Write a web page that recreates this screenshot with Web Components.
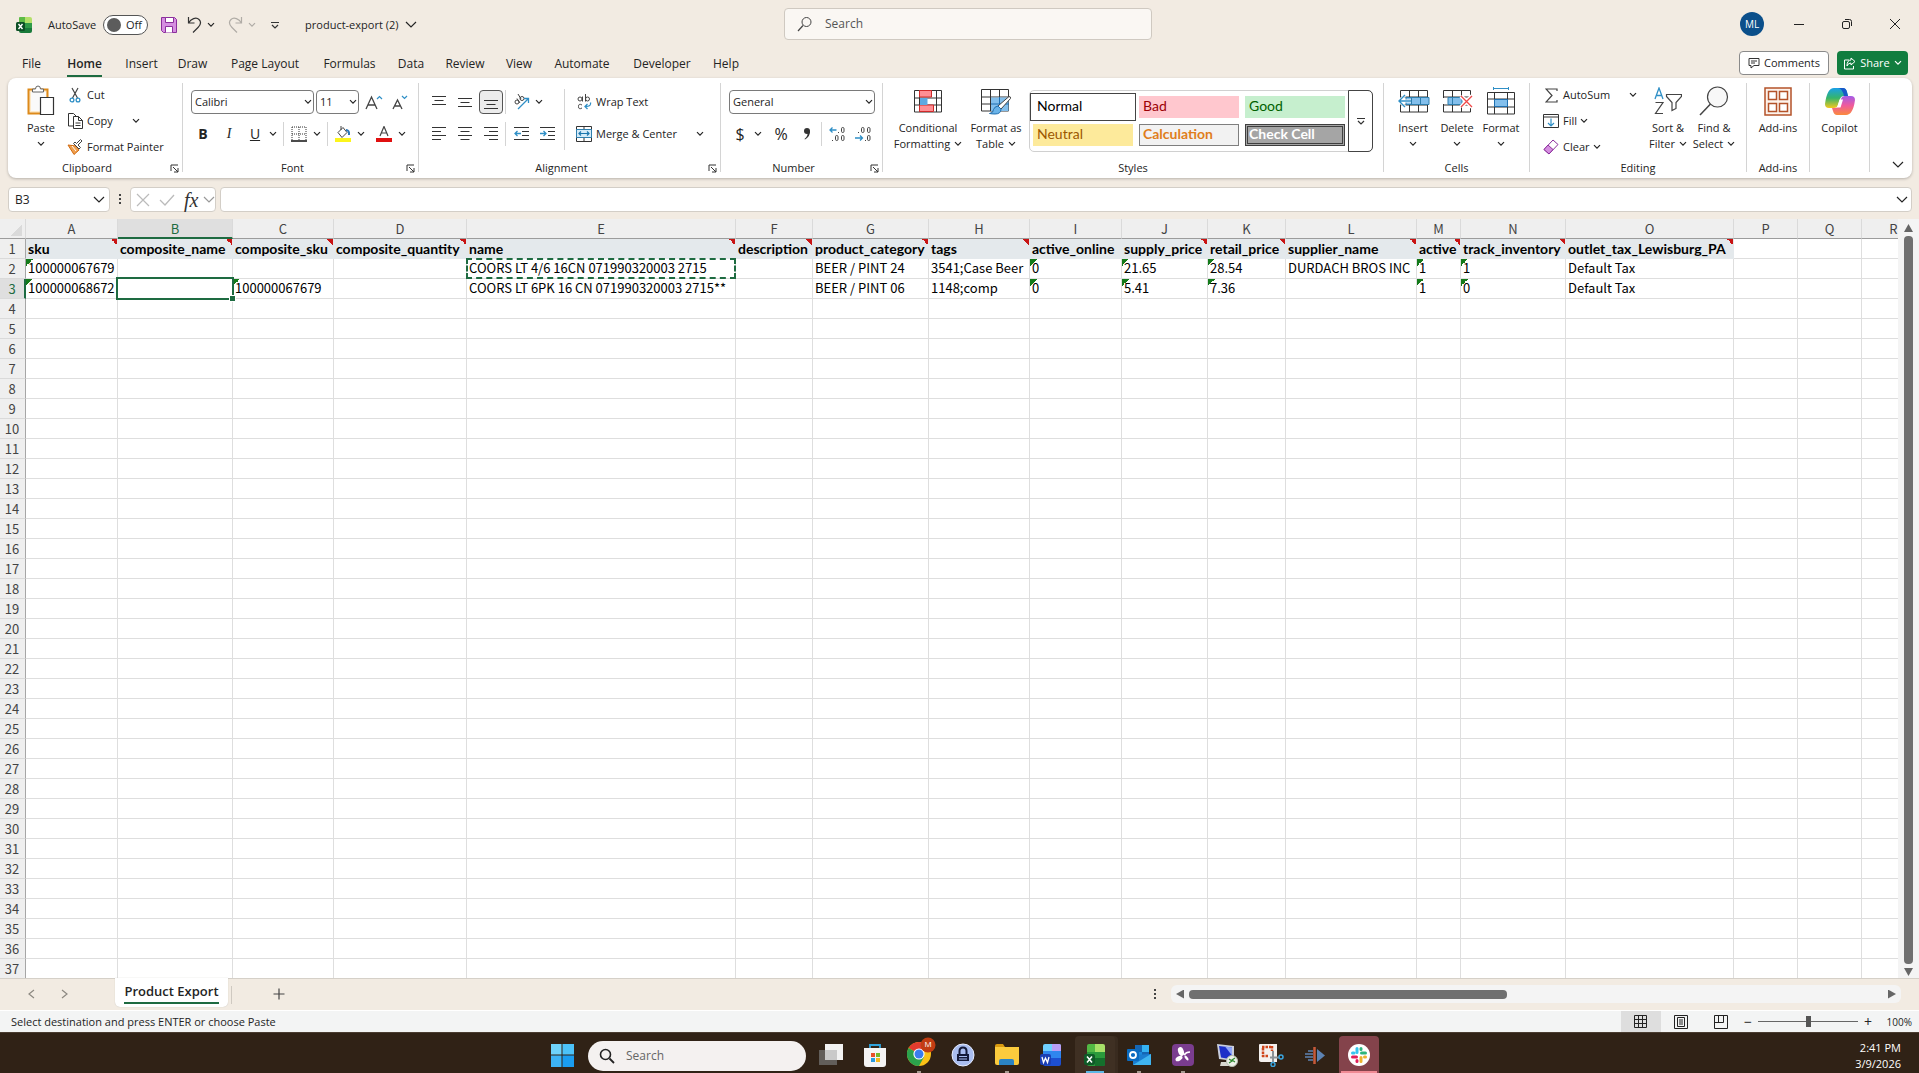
<!DOCTYPE html>
<html lang="en">
<head>
<meta charset="utf-8">
<title>product-export (2) - Excel</title>
<style>
    html, body { height: 100%; }
    body {
        margin: 0;
        display: flex;
        flex-direction: column;
        overflow: hidden;
        background: #f2ebe2;
        color: #242424;
        font: 11px/16px "Open Sans", "Noto Sans", sans-serif;
    }
    sheet-grid { flex: 1; min-height: 0; }
</style>
</head>
<body>
<title-bar></title-bar>
<ribbon-tabs></ribbon-tabs>
<excel-ribbon></excel-ribbon>
<formula-bar></formula-bar>
<sheet-grid></sheet-grid>
<sheet-tabs></sheet-tabs>
<status-bar></status-bar>
<task-bar></task-bar>

<script>
// [width, height, markup]
const ICONS = {
    chev: [8, 6, '<path d="M1 1.2l3 3 3-3" fill="none" stroke="currentColor" stroke-width="1.2"/>'],
    chevbig: [12, 8, '<path d="M1 1l5 5 5-5" fill="none" stroke="currentColor" stroke-width="1.2"/>'],
    launcher: [9, 9, '<path d="M1 7V1h7M3 3l5 5M8 4v4H4" fill="none" stroke="#333"/>'],
    excel: [16, 16, '<path d="M3 1q0-1 1-1h6v6H3z" fill="#5dbb46"/><path d="M9 0h5q2 0 2 2v4H9z" fill="#b5e06a"/><path d="M3 6h13v8q0 2-2 2H5q-2 0-2-2z" fill="#187a3a"/><path d="M9 6h7v5H9z" fill="#2f9a48"/><rect y="5" width="9" height="9" rx="1.500" fill="#0d4f26"/><path d="M2.500 7l4 5M6.500 7l-4 5" stroke="#fff" stroke-width="1.400"/>'],
    save: [16, 16, '<path d="M.5.500h13l2 2v13H2.500l-2-2z" fill="#d58ee0" stroke="#8b2f9c"/><path d="M4.500.500h8v5h-8zM4.500 15.500v-6h7v6" fill="#fff" stroke="#8b2f9c"/>'],
    undo: [17, 17, '<path d="M2.500 1v6h6M2.500 7C5 3 10 .5 13 3.500c3 3 1 6-1 8l-5 5" fill="none" stroke="#333" stroke-width="1.200"/>'],
    redo: [17, 17, '<path d="M14.500 1v6h-6M14.500 7C12 3 7 .5 4 3.500c-3 3-1 6 1 8l5 5" fill="none" stroke="#b0aca6" stroke-width="1.200"/>'],
    customize: [8, 8, '<path d="M0 1.500h8" stroke="#333"/><path d="M1 4l3 3 3-3" fill="none" stroke="#333" stroke-width="1.200"/>'],
    search: [16, 16, '<circle cx="9.500" cy="6" r="4.500" fill="none" stroke="#444"/><path d="M6 9.500L1 15" stroke="#444" stroke-width="1.200"/>'],
    min: [12, 12, '<path d="M1 6.500h10" stroke="#222"/>'],
    restore: [12, 12, '<rect x="1.500" y="3.500" width="7" height="7" rx="1.500" fill="none" stroke="#222"/><path d="M4 1.500h4.500q2 0 2 2V8" fill="none" stroke="#222"/>'],
    close: [12, 12, '<path d="M1 1l10 10M11 1L1 11" stroke="#222"/>'],
    comment: [12, 12, '<path d="M1 1.500h10v7H6l-3 2.500V8.500H1z" fill="none" stroke="#333"/><path d="M3 4h6M3 6h4" stroke="#333"/>'],
    share: [13, 13, '<path d="M6 3H1.500v9h9V9" fill="none" stroke="#fff"/><path d="M8 1l4 3.500L8 8V6Q5 6 4 9q0-6 4-6z" fill="none" stroke="#fff"/>'],
    paste: [28, 32, '<path d="M1.500 4.500h19v24h-19z" fill="#fde9c8" stroke="#dd8a1a" stroke-width="2"/><path d="M4 7h15v19H4z" fill="#fafafa"/><path d="M5.500 7V4h3q0-3 2.500-3t2.500 3h3v3z" fill="#fff" stroke="#666"/><path d="M13.500 12.500h13v17h-13z" fill="#fff" stroke="#333" stroke-width="1.200"/>'],
    cut: [12, 16, '<path d="M3 1l5.500 10M9 1L3.500 11" stroke="#444" stroke-width="1.200"/><circle cx="3" cy="13" r="1.900" fill="none" stroke="#2f8fc6" stroke-width="1.300"/><circle cx="9" cy="13" r="1.900" fill="none" stroke="#2f8fc6" stroke-width="1.300"/>'],
    copy: [17, 16, '<path d="M7 13H1.500V.500h5l3 3" fill="none" stroke="#333"/><path d="M6.500 3.500h5l4 4v8h-9z" fill="#fff" stroke="#333"/><path d="M11.500 3.500v4h4M8.500 10h5M8.500 12.500h5" fill="none" stroke="#333"/>'],
    painter: [16, 16, '<path d="M1 6l8 1 3 4-5 4.500z" fill="#f0a050" stroke="#d06a10"/><path d="M5 7l4 5" stroke="#fff"/><path d="M6.500 4.500l5.500 5.500 1.500-1.500L11 6l4-4-1.500-1.500-4 4L8 3z" fill="#fff" stroke="#444"/>'],
    bigA: [18, 16, '<path d="M1 15L6.500 3 12 15M3 11h7" fill="none" stroke="#444" stroke-width="1.300"/><path d="M12 5l2.500-2.500L17 5" fill="none" stroke="#2f8fc6" stroke-width="1.200"/>'],
    smallA: [16, 16, '<path d="M1 15L5.500 6 10 15M3 12h5" fill="none" stroke="#444" stroke-width="1.300"/><path d="M10 2l2.500 2.500L15 2" fill="none" stroke="#2f8fc6" stroke-width="1.200"/>'],
    borders: [16, 16, '<path d="M1 1h14v14M1 1v14M8 1v14M1 8h14" fill="none" stroke="#333" stroke-dasharray="1 1"/><path d="M0 15h16" stroke="#111" stroke-width="1.500"/>'],
    bucket: [16, 16, '<path d="M3 6.500l5-5 4 5-5 5zM6 4V0" fill="#fff" stroke="#444"/><path d="M11 4q3.500 0 3 5" fill="none" stroke="#2a77b8" stroke-width="2"/><path d="M0 12h16v4H0z" fill="#fcf51c"/>'],
    fontcolor: [16, 16, '<path d="M4 10L8 .500 12 10M5.500 7h5" fill="none" stroke="#444" stroke-width="1.200"/><path d="M0 12h16v4H0z" fill="#e01010"/>'],
    vtop: [14, 14, '<path d="M0 1.500h14M2.500 5.500h9M0 9.500h14" stroke="#333"/>'],
    vmid: [14, 14, '<path d="M0 3.500h14M2.500 7.500h9M0 11.500h14" stroke="#333"/>'],
    vbot: [14, 14, '<path d="M0 5.500h14M2.500 9.500h9M0 13.500h14" stroke="#333"/>'],
    left: [14, 14, '<path d="M0 .5h14M0 4.500h9M0 8.500h14M0 12.500h9" stroke="#333"/>'],
    center: [14, 14, '<path d="M0 .5h14M2.500 4.500h9M0 8.500h14M2.500 12.500h9" stroke="#333"/>'],
    right: [14, 14, '<path d="M0 .5h14M5 4.500h9M0 8.500h14M5 12.500h9" stroke="#333"/>'],
    orient: [17, 16, '<g fill="none" stroke="#444"><circle cx="4" cy="8" r="2"/><path d="M4 4.500l3 4.500"/><circle cx="9" cy="4.500" r="2"/><path d="M5 0l3 5"/></g><path d="M5 15L15 5M11 4.500h4.500V9" fill="none" stroke="#2f8fc6" stroke-width="1.300"/>'],
    outdent: [15, 14, '<path d="M0 .5h15M8 4.500h7M8 8.500h7M0 12.500h15" stroke="#333"/><path d="M7 6.500H1M3.500 4L1 6.500 3.500 9" fill="none" stroke="#2f8fc6" stroke-width="1.300"/>'],
    indent: [15, 14, '<path d="M0 .5h15M8 4.500h7M8 8.500h7M0 12.500h15" stroke="#333"/><path d="M0 6.500h6M3.500 4L6 6.500 3.500 9" fill="none" stroke="#2f8fc6" stroke-width="1.300"/>'],
    wrap: [15, 16, '<g fill="none" stroke="#444"><circle cx="3" cy="5" r="2"/><path d="M5.500 2.500v5M8.500 0v7.500"/><circle cx="10.500" cy="5" r="2"/><path d="M5 11q-3.500-2-3.500 1.500T5 14"/></g><path d="M13.500 8.500q1 4-5 4M10.500 10L8 12.500l2.500 2.500" fill="none" stroke="#2f8fc6" stroke-width="1.300"/>'],
    merge: [16, 16, '<path d="M.5.500h15v15H.500zM8 0v4M8 12v4" fill="#fff" stroke="#333"/><path d="M.5 3.500h15v8H.500z" fill="#d5ebf8" stroke="#2f7fae"/><path d="M3 7.500h10M5 5.500l-2 2 2 2M11 5.500l2 2-2 2" fill="none" stroke="#1b76ad" stroke-width="1.200"/>'],
    comma: [8, 14, '<circle cx="4" cy="4" r="3" fill="#333"/><path d="M7 4q.5 5-5 8.500L1.500 12Q5 9 4.500 6z" fill="#333"/>'],
    decinc: [16, 16, '<g fill="none" stroke="#444"><rect x="12.500" y="1.500" width="2.500" height="5" rx="1.200"/><rect x="6.500" y="9.500" width="2.500" height="5" rx="1.200"/><rect x="12.500" y="9.500" width="2.500" height="5" rx="1.200"/><path d="M9.500 6v1M3.500 14v1"/></g><path d="M7.500 4H1M3.500 1.500L1 4l2.500 2.500" fill="none" stroke="#2f8fc6" stroke-width="1.300"/>'],
    decdec: [16, 16, '<g fill="none" stroke="#444"><rect x="6.500" y="1.500" width="2.500" height="5" rx="1.200"/><rect x="12.500" y="1.500" width="2.500" height="5" rx="1.200"/><rect x="12.500" y="9.500" width="2.500" height="5" rx="1.200"/><path d="M3.500 6v1M10.500 14v1"/></g><path d="M0 12h7.500M5 9.500L7.500 12 5 14.500" fill="none" stroke="#2f8fc6" stroke-width="1.300"/>'],
    condfmt: [28, 23, '<path d="M.5.500h27v21.500H.500zM.5 8h27M.5 15h27M5.500 0v22M22.500 0v22" fill="#fff" stroke="#333"/><path d="M5.500.500h12V7h-12zM5.500 15h14v6.500h-14z" fill="#ff8f94" stroke="#d02a2a"/><path d="M6 8h7.500v7H6z" fill="#5ea9e2"/>'],
    fmttable: [31, 28, '<path d="M.5 2.500h27V24H.500zM.5 10h27M.5 17h27M9.500 2v22M18.500 2v22" fill="#fff" stroke="#333"/><path d="M10 10.500h17.500V24H10z" fill="#83bfec"/><path d="M10 17h18M18.500 10v14" stroke="#1f6fb0"/><path d="M17 19L28 9.500q2 0 1.500 2L20 22z" fill="#fff" stroke="#444"/><path d="M17 19l3 3q0 5-6 5-3 0-5.500-.500 4-.500 4-4 1-3 4.500-3.500z" fill="#6ab3e8" stroke="#1f6fb0"/>'],
    insert: [33, 23, '<path d="M3.500.500h27v21.500h-27zM3.500 7h27M3.500 15h27M12.500 0v22M21.500 0v22" fill="#fff" stroke="#333"/><path d="M9 7.500h23v7H9z" fill="#83bfec" stroke="#2f7fae"/><path d="M14.500 7.500v7M23.500 7.500v7" stroke="#2f7fae"/><path d="M14 11H2M8 5l-6 6 6 6" fill="none" stroke="#fff" stroke-width="3"/><path d="M14 11H2M8 5l-6 6 6 6" fill="none" stroke="#2f8fc6" stroke-width="1.400"/>'],
    delete: [32, 23, '<path d="M2.500.500h27v21.500h-27zM2.500 7h27M2.500 15h27M11.500 0v22M20.500 0v22" fill="#fff" stroke="#333"/><path d="M1 8h4v6H1zM27 8h5v6h-5z" fill="#fff"/><path d="M7 7.500h14v7H7z" fill="#83bfec" stroke="#2f7fae"/><path d="M11.500 7.500v7" stroke="#2f7fae"/><path d="M20 6l11 11M31 6L20 17" stroke="#fff" stroke-width="4"/><path d="M20 6l11 11M31 6L20 17" stroke="#f04848" stroke-width="1.300"/>'],
    format: [28, 28, '<path d="M.5 5.500h27V27H.500zM.5 12h27M.5 20h27M7.500 5v22M20.500 5v22" fill="#fff" stroke="#333"/><path d="M7.500 12.500h13v7h-13z" fill="#83bfec" stroke="#1f6fb0"/><path d="M6.500 0v3M21.500 0v3M6.500 1.500h15" stroke="#2f8fc6"/>'],
    sigma: [13, 15, '<path d="M12 3V1H1l6 6.500L1 14h11v-2" fill="none" stroke="#444" stroke-width="1.200"/>'],
    fill: [16, 14, '<path d="M.5.500h15v13H.500zM.5 3h15" fill="#fff" stroke="#333"/><path d="M8 4.500V12M5 9l3 3 3-3" fill="none" stroke="#2f8fc6" stroke-width="1.200"/>'],
    eraser: [16, 16, '<path d="M1 10.500L10 1l5 4.500L6 15z" fill="#fff" stroke="#8b2f9c"/><path d="M1 10.500L5 6l5 4.500L6 15z" fill="#d58ee0" stroke="#8b2f9c"/>'],
    sort: [28, 28, '<path d="M1 12L5 1l4 11M2.500 8.500h5" fill="none" stroke="#2f8fc6" stroke-width="1.300"/><path d="M1.500 15.500H9L1.500 26.500H9" fill="none" stroke="#444" stroke-width="1.200"/><path d="M12.500 7.500h15v2l-5.500 6v6l-4 2v-8l-5.500-6z" fill="#fff" stroke="#444" stroke-width="1.200"/>'],
    find: [30, 30, '<circle cx="18.500" cy="11" r="10" fill="#f8f8f8" stroke="#444" stroke-width="1.200"/><path d="M11.500 18L1 29" stroke="#444" stroke-width="1.500"/>'],
    addins: [28, 29, '<path d="M1 1h26v27H1z" fill="#fdf3ec" stroke="#b4532a" stroke-width="1.500"/><path d="M4.500 4.500h8v8h-8zM15.500 4.500h8v8h-8zM4.500 16.500h8v8h-8zM15.500 16.500h8v8h-8z" fill="#fff" stroke="#b4532a" stroke-width="1.500"/>'],
    copilot: [30, 29, '<defs><linearGradient id="a" x1="0" y1="0" x2="0" y2="1"><stop stop-color="#1aa0e8"/><stop offset=".5" stop-color="#35b56a"/><stop offset="1" stop-color="#f4c81e"/></linearGradient><linearGradient id="b" x1="0" y1="0" x2="0" y2="1"><stop stop-color="#a45be8"/><stop offset=".5" stop-color="#ef5b9c"/><stop offset="1" stop-color="#fb8a3c"/></linearGradient></defs><path d="M9 1h9q3 0 4 4l1 4h-4q-3 0-4 3l-2 6q-1 3-4 3H4q-4 0-4-4Q2 1 9 1z" fill="url(#a)"/><path d="M21 28h-9q-3 0-4-4l-1-3h3q3 0 4-3l2-6q1-3 4-3h6q4 0 4 4-2 15-9 15z" fill="url(#b)"/><path d="M13 1h5q3 0 4 4l1 4h-4q-2-8-6-8z" fill="#1858c8"/><path d="M14.500 12.500h3.500l-2.500 8H12z" fill="#fff"/>'],
    dots: [4, 11, '<path d="M1 0h2v2H1zM1 4h2v2H1zM1 8h2v2H1z" fill="#444"/>'],
    cancel: [14, 14, '<path d="M1 1l12 12M13 1L1 13" stroke="#bbb" stroke-width="1.200"/>'],
    enter: [16, 12, '<path d="M1 6l5 5L15 1" fill="none" stroke="#bbb" stroke-width="1.300"/>'],
    prev: [7, 10, '<path d="M6 1L1 5l5 4" fill="none" stroke="#8c8880" stroke-width="1.200"/>'],
    next: [7, 10, '<path d="M1 1l5 4-5 4" fill="none" stroke="#8c8880" stroke-width="1.200"/>'],
    plus: [12, 12, '<path d="M6 .500v11M.5 6h11" stroke="#444" stroke-width="1.200"/>'],
    normal: [14, 14, '<path d="M.5.500h12v12H.500zM.5 4.500h12M.5 8.500h12M4.500 0v13M8.500 0v13" fill="none" stroke="#222"/>'],
    layout: [14, 14, '<path d="M.5.500h13v13H.500zM3.500 2.500h7v9h-7zM5 5h4M5 7h4M5 9h4" fill="none" stroke="#222"/>'],
    pagebreak: [14, 14, '<path d="M.5.500h13v13H.500zM4.500 0v7.500H9.500V0M.5 7.500H5" fill="none" stroke="#222"/>'],
    // task bar
    windows: [24, 24, '<path d="M1 1h10.500v10.500H1z" fill="#6fd3fb"/><path d="M12.500 1H24v10.500H12.500z" fill="#4cc2f8"/><path d="M1 12.500h10.500V24H1z" fill="#3db4f5"/><path d="M12.500 12.500H24V24H12.500z" fill="#1a9df0"/>'],
    tbsearch: [16, 16, '<circle cx="6.500" cy="6.500" r="5" fill="none" stroke="#222" stroke-width="1.600"/><path d="M10.500 10.500L15 15" stroke="#222" stroke-width="1.800"/>'],
    taskview: [24, 24, '<path d="M6 1h18v16H6z" fill="#f2f2f2"/><path d="M0 7h18v15H0z" fill="#777" fill-opacity=".7"/><path d="M6 7h12v10H6z" fill="#c9c9c9"/>'],
    store: [24, 24, '<path d="M7 6V2h10v4" fill="none" stroke="#2fa3dc" stroke-width="1.800"/><path d="M1 5h22v16q0 3-3 3H4q-3 0-3-3z" fill="#f4f4f4"/><path d="M8 10h4v4H8z" fill="#e8502a"/><path d="M13 10h4v4h-4z" fill="#76b82a"/><path d="M8 15h4v4H8z" fill="#2a9be0"/><path d="M13 15h4v4h-4z" fill="#f5b81e"/>'],
    chrome: [30, 30, '<circle cx="12" cy="17" r="12" fill="#fbc116"/><path d="M12 17L1.600 11A12 12 0 0 1 22.400 11z" fill="#e33b2e"/><path d="M12 17L1.600 11A12 12 0 0 0 12 29l5-9z" fill="#2ba24c"/><circle cx="12" cy="17" r="5.600" fill="#fff"/><circle cx="12" cy="17" r="4.500" fill="#3b7ded"/><circle cx="21" cy="8" r="7.500" fill="#c23d12"/>'],
    lock: [24, 24, '<circle cx="12" cy="12" r="11" fill="#a9bdf0" stroke="#e6ecff"/><path d="M8.500 11V8q0-3.500 3.500-3.500T15.500 8v3" fill="none" stroke="#151b3a" stroke-width="2"/><path d="M6 11h12v7H6z" fill="#151b3a"/><path d="M8 13.500h8M8 16h8" stroke="#a9bdf0"/>'],
    folder: [24, 24, '<path d="M0 3q0-2 2-2h6l2 3H0z" fill="#d99a10"/><path d="M0 4h24v16q0 2-2 2H2q-2 0-2-2z" fill="#fbcb3d"/><path d="M4 22v-4q0-2 2-2h11q2 0 2 2v4z" fill="#2b84c4"/>'],
    word: [24, 24, '<path d="M4 3q0-2 2-2h14q2 0 2 2v5H4z" fill="#6fd0ff"/><path d="M13 1h7q2 0 2 2v5h-9z" fill="#b99df5"/><path d="M4 8h18v7H4z" fill="#2f86ee"/><path d="M4 15h18v6q0 2-2 2H6q-2 0-2-2z" fill="#1d4fd0"/><rect x="1" y="11" width="11" height="11" rx="2" fill="#1b3fb4"/><path d="M3 14l1.500 5.500L6.500 15l2 4.500L10 14" fill="none" stroke="#fff" stroke-width="1.300"/>'],
    excel24: [24, 24, '<path d="M4 3q0-2 2-2h8v9H4z" fill="#52b944"/><path d="M12 1h8q2 0 2 2v7H12z" fill="#a7e068"/><path d="M4 9h18v12q0 2-2 2H6q-2 0-2-2z" fill="#2a9a3c"/><path d="M12 15h10v6q0 2-2 2h-8z" fill="#14702c"/><rect x="1" y="11" width="11" height="11" rx="2" fill="#0f5a28"/><path d="M4 13.500l5 6M9 13.500l-5 6" stroke="#fff" stroke-width="1.500"/>'],
    outlook: [24, 24, '<path d="M8 2h14v14H8z" fill="#1566b4"/><path d="M15 2h7v7h-7z" fill="#35b2f2"/><path d="M8 9h7v7H8z" fill="#1b8ade"/><path d="M6 12l18-1v11H6z" fill="#1a7dd0"/><path d="M6 22l18-11v11z" fill="#3fb4f0"/><rect y="6" width="12" height="12" rx="1" fill="#0a6bc0"/><circle cx="6" cy="12" r="3" fill="none" stroke="#fff" stroke-width="1.800"/>'],
    splash: [24, 24, '<rect x="1" y="1" width="22" height="22" rx="4" fill="#7a3d8f"/><g fill="#fff"><ellipse cx="10" cy="8.500" rx="2.800" ry="4.500" transform="rotate(-20 10 8.500)"/><ellipse cx="8" cy="15.500" rx="3.800" ry="2.200" transform="rotate(-30 8 15.500)"/><ellipse cx="15.500" cy="15" rx="2.800" ry="1.300" transform="rotate(50 15.500 15)"/></g><path d="M13 12q2-3 6-3" fill="none" stroke="#fff" stroke-width="1.600"/>'],
    rdp: [24, 24, '<path d="M2 1l17 2v15L4 16z" fill="#c9cede"/><path d="M4 3l13 1.500v12L6 14.500z" fill="#1c2fc8"/><path d="M10 3.500l7 1v8z" fill="#8fa5f8"/><path d="M6 19h9l1 4H5z" fill="#d9d9d0"/><circle cx="17" cy="18" r="5.500" fill="#eef2ea" stroke="#b5bcae"/><path d="M14 16l3 2-3 2M20 15l-3 2 3 2" fill="none" stroke="#2f8a2f" stroke-width="1.300"/>'],
    snip: [25, 24, '<path d="M0 2q0-1 1-1h17v18H2q-2 0-2-2z" fill="#f4f1ef"/><path d="M3 4h9M4 5v9M13 3v5M3 13h6" fill="none" stroke="#d0451b" stroke-width="2.500" stroke-dasharray="2.500 1"/><path d="M14 8v11M11 14.500h9" stroke="#8b9299" stroke-width="2"/><circle cx="14" cy="21.500" r="2" fill="none" stroke="#3aa6e0" stroke-width="1.500"/><circle cx="22" cy="14" r="2" fill="none" stroke="#3aa6e0" stroke-width="1.500"/>'],
    merge24: [24, 24, '<path d="M5 8h5M2 11h8M2 14h8M5 17h5" stroke="#5d83b3" stroke-width="1.600"/><path d="M11.500 4v17" stroke="#c75a3a" stroke-width="2.500"/><path d="M14 6l8 6.500-8 6.500z" fill="#5d83b3"/>'],
    slack: [24, 24, '<circle cx="12" cy="12" r="11" fill="#fff"/><g stroke-width="3" stroke-linecap="round"><path d="M10 5.500v4M5.500 10H7" stroke="#36c5f0"/><path d="M14.500 10h4M14 5.500v1" stroke="#2eb67d"/><path d="M14 14.500v4M17.500 14h1" stroke="#ecb22e"/><path d="M5.500 14h4M10 17.500v1" stroke="#e01e5a"/></g>']
};

const RESET = `
    :host, * { box-sizing: border-box; }
    button, input, select { font: inherit; color: inherit; }
    button { border: 0; background: none; padding: 0; display: flex; align-items: center; justify-content: center; }
`;

// Base class: every component hands over its own markup and styles
class BaseElement extends HTMLElement {
    constructor() {
        super();
        this.attachShadow({ mode: 'open' });
    }
    connectedCallback() {
        this.shadowRoot.innerHTML = `<style>${RESET}</style>` + this.render();
    }
}

class UiIcon extends BaseElement {
    render() {
        const [w, h, body] = ICONS[this.getAttribute('name')];
        return `
        <style>:host { display: inline-flex; flex: none; } svg { display: block; }</style>
        <svg width="${w}" height="${h}" viewBox="0 0 ${w} ${h}" aria-hidden="true">${body}</svg>`;
    }
}

class TitleBar extends BaseElement {
    render() {
        return `
        <style>
            :host { display: grid; grid-template-columns: 784fr 368px 767fr; height: 48px; align-items: center; }
            div { display: flex; align-items: center; }
            .left { padding: 1px 0 0 16px; }
            .toggle { display: flex; align-items: center; gap: 7px; margin-left: 16px; }
            .switch { width: 45px; height: 20px; border: 1px solid #555; border-radius: 10px; background: #fff; display: flex; align-items: center; gap: 5px; padding: 0 3px; }
            .switch input { appearance: none; width: 14px; height: 14px; margin: 0; border-radius: 50%; background: #5c5c5c; }
            .quick { gap: 9px; margin-left: 13px; }
            .quick .pair { gap: 1px; }
            .pair ui-icon + button, .small { width: 14px; height: 20px; }
            .dim { color: #b0aca6; }
            .name { margin-left: 23px; gap: 7px; }
            .search { height: 32px; border: 1px solid #cfc9c1; border-radius: 4px; background: #faf7f3; gap: 12px; padding: 0 12px; }
            .search input { border: 0; outline: 0; background: none; flex: 1; padding: 0; font-size: 12px; }
            .search input::placeholder { color: #555; opacity: 1; }
            .right { justify-content: flex-end; }
            .avatar { width: 24px; height: 24px; border-radius: 50%; background: #0b4f8a; color: #fff; font-size: 10px; margin-right: 11px; }
            .win { width: 48px; height: 48px; }
        </style>
        <div class="left">
            <ui-icon name="excel"></ui-icon>
            <label class="toggle">AutoSave <span class="switch"><input type="checkbox">Off</span></label>
            <div class="quick">
                <button aria-label="Save"><ui-icon name="save"></ui-icon></button>
                <div class="pair"><button aria-label="Undo"><ui-icon name="undo"></ui-icon></button><button class="small" aria-label="Undo list"><ui-icon name="chev"></ui-icon></button></div>
                <div class="pair dim"><button aria-label="Redo"><ui-icon name="redo"></ui-icon></button><button class="small" aria-label="Redo list"><ui-icon name="chev"></ui-icon></button></div>
                <button class="small" aria-label="Customize Quick Access Toolbar"><ui-icon name="customize"></ui-icon></button>
            </div>
            <button class="name">product-export (2) <ui-icon name="chevbig"></ui-icon></button>
        </div>
        <div class="search"><ui-icon name="search"></ui-icon><input type="search" placeholder="Search" aria-label="Search"></div>
        <div class="right">
            <button class="avatar">ML</button>
            <button class="win" aria-label="Minimize"><ui-icon name="min"></ui-icon></button>
            <button class="win" aria-label="Restore"><ui-icon name="restore"></ui-icon></button>
            <button class="win" aria-label="Close"><ui-icon name="close"></ui-icon></button>
        </div>`;
    }
}

class RibbonTabs extends BaseElement {
    render() {
        const tabs = ['File', 'Home', 'Insert', 'Draw', 'Page Layout', 'Formulas', 'Data', 'Review', 'View', 'Automate', 'Developer', 'Help'];
        return `
        <style>
            :host { display: flex; justify-content: space-between; height: 30px; padding: 0 11px 0 10px; font-size: 12px; }
            nav { display: grid; grid-template-columns: 43px 63px 51px 51px 94px 75px 48px 60px 48px 78px 82px 46px; padding-top: 2px; }
            nav button span { padding: 4px 0 3px; border-bottom: 2px solid transparent; }
            nav .on span { font-weight: 600; border-color: #1e6b41; }
            .actions { display: flex; gap: 8px; padding-top: 3px; }
            .actions button { height: 24px; border-radius: 4px; gap: 4px; font-size: 11px; }
            .comments { width: 90px; background: #fff; border: 1px solid #8a8a8a; }
            .share { width: 71px; background: #117d3f; color: #fff; }
        </style>
        <nav>${tabs.map(t => `<button class="${t === 'Home' ? 'on' : ''}"><span>${t}</span></button>`).join('')}</nav>
        <div class="actions">
            <button class="comments"><ui-icon name="comment"></ui-icon>Comments</button>
            <button class="share"><ui-icon name="share"></ui-icon>Share <ui-icon name="chev"></ui-icon></button>
        </div>`;
    }
}

// Ribbon group with its caption and optional dialog launcher
class RibbonGroup extends BaseElement {
    render() {
        const label = this.getAttribute('label') || '';
        return `
        <style>
            :host { display: flex; flex: none; }
            .body { flex: 1; display: flex; flex-direction: column; padding: 4px 0 2px; }
            .content { height: 78px; display: flex; }
            .foot { display: flex; height: 16px; }
            .foot span { flex: 1; text-align: center; }
            .foot button { width: 16px; }
            i { width: 1px; margin: 5px 0 6px; background: #d4d4d4; }
        </style>
        <div class="body">
            <div class="content"><slot></slot></div>
            <div class="foot"><span>${label}</span>${this.hasAttribute('launcher') ? `<button aria-label="${label} settings"><ui-icon name="launcher"></ui-icon></button>` : ''}</div>
        </div>
        <i></i>`;
    }
}

class BigButton extends BaseElement {
    render() {
        const chev = this.hasAttribute('menu') ? '<ui-icon name="chev"></ui-icon>' : '';
        return `
        <style>
            :host { display: block; flex: none; }
            button { flex-direction: column; width: 100%; line-height: 16px; }
            .pic { height: 38px; display: flex; align-items: center; }
            .line { height: 16px; display: flex; align-items: center; gap: 4px; white-space: nowrap; }
        </style>
        <button>
            <span class="pic"><ui-icon name="${this.getAttribute('icon')}"></ui-icon></span>
            <span class="line"><slot></slot></span>
            <span class="line"><slot name="second"></slot>${chev}</span>
        </button>`;
    }
}

class RowButton extends BaseElement {
    render() {
        return `
        <style>
            :host { display: flex; height: 26px; align-items: center; }
            .pic { width: 22px; display: flex; justify-content: center; margin-right: 1px; }
            button { white-space: nowrap; }
            .menu { width: 14px; height: 20px; }
            :host([spread]) { justify-content: space-between; }
        </style>
        <button><span class="pic"><ui-icon name="${this.getAttribute('icon')}"></ui-icon></span><slot></slot></button>
        ${this.hasAttribute('menu') ? `<button class="menu" aria-label="${this.textContent} options"><ui-icon name="chev"></ui-icon></button>` : ''}`;
    }
}

class ComboBox extends BaseElement {
    render() {
        return `
        <style>
            :host { display: grid; height: 24px; }
            select, ui-icon { grid-area: 1 / 1; }
            select { appearance: none; border: 1px solid #7a7a7a; border-radius: 4px; background: #fff; padding: 0 3px; width: 100%; }
            ui-icon { justify-self: end; align-self: center; margin-right: 2px; pointer-events: none; }
        </style>
        <select aria-label="${this.getAttribute('label')}"><option>${this.getAttribute('value')}</option></select>
        <ui-icon name="chev"></ui-icon>`;
    }
}

class ExcelRibbon extends BaseElement {
    render() {
        const tool = (name, label, cls = '') => `<button class="tool ${cls}" aria-label="${label}"><ui-icon name="${name}"></ui-icon></button>`;
        const menu = label => `<button class="menu" aria-label="${label} options"><ui-icon name="chev"></ui-icon></button>`;
        return `
        <style>
            :host { display: flex; margin: 0 7px 0 8px; height: 100px; background: #fff; border-radius: 8px; box-shadow: 0 1px 3px rgba(0, 0, 0, .25); }
            .stack { display: flex; flex-direction: column; }
            .rows { display: flex; flex-direction: column; gap: 8px; padding: 8px 0 0 8px; }
            .row { display: flex; align-items: center; height: 24px; }
            .row.in { padding-left: 1px; }
            .tool { width: 22px; height: 24px; font-size: 14px; }
            .tool + .tool { margin-left: 4px; }
            .menu { width: 14px; height: 24px; }
            .menu + .tool { margin-left: 5px; }
            .sep { width: 1px; height: 24px; margin: 0 4px 0 3px; background: #d4d4d4; }
            .sep.tall { height: 61px; margin: 7px 8px 0 6px; }
            .on { background: #ececec; border: 1px solid #555; border-radius: 4px; width: 24px; margin-right: -1px; }
            .on.on { margin-left: 3px; }
            .gallery { display: flex; width: 344px; height: 62px; margin-top: 8px; border: 1px solid #d0d0d0; border-radius: 5px; }
            .styles { display: grid; grid-template-columns: repeat(3, 100px); grid-auto-rows: 22px; gap: 6px; padding: 5px 3px; }
            .styles button { justify-content: flex-start; padding: 0 0 2px 4px; font: 14px/18px Lato, sans-serif; }
            .normal { outline: 1px solid #444; outline-offset: 2px; color: #000; background: #fff; }
            .bad { background: #ffc7ce; color: #9c0006; }
            .good { background: #c6efce; color: #006100; }
            .neutral { background: #fdea9b; color: #9c5700; }
            .styles .calc { background: #f2f2f2; color: #e07e1c; border: 1px solid #7f7f7f; font-weight: 700; padding-left: 3px; }
            .styles .check { background: #a5a5a5; color: #fff; border: 3px double #3f3f3f; font-weight: 700; padding-left: 1px; }
            .more { width: 25px; margin: -1px -1px -1px auto; border: 1px solid #444; border-radius: 0 5px 5px 0; }
            .end { flex: 1; display: flex; justify-content: flex-end; align-items: flex-end; padding: 0 8px 9px 0; }
        </style>
        <ribbon-group label="Clipboard" launcher style="width:175px">
            <big-button icon="paste" menu style="width:40px;margin-left:13px">Paste</big-button>
            <div class="stack" style="width:79px;margin-left:3px">
                <row-button icon="cut">Cut</row-button>
                <row-button icon="copy" menu spread>Copy</row-button>
                <row-button icon="painter">Format Painter</row-button>
            </div>
        </ribbon-group>
        <ribbon-group label="Font" launcher style="width:236px">
            <div class="rows">
                <div class="row">
                    <combo-box label="Font" value="Calibri" style="width:123px"></combo-box>
                    <combo-box label="Font size" value="11" style="width:43px;margin:0 4px 0 2px"></combo-box>
                    ${tool('bigA', 'Increase font size')}${tool('smallA', 'Decrease font size')}
                </div>
                <div class="row in">
                    <button class="tool"><b>B</b></button><button class="tool"><em style="font-family:'Liberation Serif',serif">I</em></button><button class="tool"><u>U</u></button>${menu('Underline')}
                    <span class="sep"></span>${tool('borders', 'Borders')}${menu('Borders')}
                    <span class="sep"></span>${tool('bucket', 'Fill color')}${menu('Fill color')}${tool('fontcolor', 'Font color')}${menu('Font color')}
                </div>
            </div>
        </ribbon-group>
        <ribbon-group label="Alignment" launcher style="width:302px">
            <div class="rows">
                <div class="row in">
                    ${tool('vtop', 'Top align')}${tool('vmid', 'Middle align')}${tool('vbot', 'Bottom align', 'on')}
                    <span class="sep"></span>${tool('orient', 'Orientation')}${menu('Orientation')}
                </div>
                <div class="row in">
                    ${tool('left', 'Align left')}${tool('center', 'Center')}${tool('right', 'Align right')}
                    <span class="sep"></span>${tool('outdent', 'Decrease indent')}${tool('indent', 'Increase indent')}
                </div>
            </div>
            <span class="sep tall"></span>
            <div class="stack" style="width:134px;gap:6px;padding-top:7px">
                <row-button icon="wrap">Wrap Text</row-button>
                <row-button icon="merge" menu spread>Merge &amp; Center</row-button>
            </div>
        </ribbon-group>
        <ribbon-group label="Number" launcher style="width:162px">
            <div class="rows">
                <combo-box label="Number format" value="General" style="width:146px"></combo-box>
                <div class="row">
                    <button class="tool" style="font-size:16px">$</button>${menu('Accounting')}<button class="tool" style="font-size:16px">%</button>${tool('comma', 'Comma style')}
                    <span class="sep"></span>${tool('decinc', 'Increase decimal')}${tool('decdec', 'Decrease decimal')}
                </div>
            </div>
        </ribbon-group>
        <ribbon-group label="Styles" style="width:501px">
            <big-button icon="condfmt" menu style="width:70px;margin-left:10px">Conditional<span slot="second">Formatting</span></big-button>
            <big-button icon="fmttable" menu style="width:58px;margin:0 4px">Format as<span slot="second">Table</span></big-button>
            <div class="gallery">
                <div class="styles">
                    <button class="normal">Normal</button><button class="bad">Bad</button><button class="good">Good</button>
                    <button class="neutral">Neutral</button><button class="calc">Calculation</button><button class="check">Check Cell</button>
                </div>
                <button class="more" aria-label="More styles"><ui-icon name="customize"></ui-icon></button>
            </div>
        </ribbon-group>
        <ribbon-group label="Cells" style="width:146px">
            <big-button icon="insert" menu style="width:44px;margin-left:7px">Insert</big-button>
            <big-button icon="delete" menu style="width:44px">Delete</big-button>
            <big-button icon="format" menu style="width:44px">Format</big-button>
        </ribbon-group>
        <ribbon-group label="Editing" style="width:217px">
            <div class="stack" style="width:100px;margin:0 5px 0 10px">
                <row-button icon="sigma" menu spread>AutoSum</row-button>
                <row-button icon="fill" menu>Fill</row-button>
                <row-button icon="eraser" menu>Clear</row-button>
            </div>
            <big-button icon="sort" menu style="width:46px">Sort &amp;<span slot="second">Filter</span></big-button>
            <big-button icon="find" menu style="width:46px">Find &amp;<span slot="second">Select</span></big-button>
        </ribbon-group>
        <ribbon-group label="Add-ins" style="width:63px">
            <big-button icon="addins" style="width:62px">Add-ins</big-button>
        </ribbon-group>
        <ribbon-group style="width:60px">
            <big-button icon="copilot" style="width:59px">Copilot</big-button>
        </ribbon-group>
        <div class="end"><button aria-label="Collapse ribbon"><ui-icon name="chevbig"></ui-icon></button></div>`;
    }
}

class FormulaBar extends BaseElement {
    render() {
        return `
        <style>
            :host { display: flex; align-items: center; margin: 9px 7px 7px 8px; height: 25px; font-size: 12px; }
            .box { display: flex; align-items: center; height: 25px; background: #fff; border: 1px solid #d3cec7; border-radius: 4px; }
            input { border: 0; outline: 0; background: none; padding: 0 6px; min-width: 0; flex: 1; }
            .name { width: 102px; padding-right: 4px; }
            .dots { width: 20px; }
            .fx { width: 86px; padding-left: 5px; margin-right: 4px; color: #999; }
            .fx button + button { margin-left: 9px; }
            .fx button:last-child { margin-left: 5px; }
            .fx em { font: italic 20px/20px "Liberation Serif", serif; color: #333; }
            .formula { flex: 1; padding-right: 3px; }
        </style>
        <div class="box name"><input value="B3" aria-label="Name box"><button aria-label="Names"><ui-icon name="chevbig"></ui-icon></button></div>
        <button class="dots" aria-label="Resize"><ui-icon name="dots"></ui-icon></button>
        <div class="box fx">
            <button aria-label="Cancel"><ui-icon name="cancel"></ui-icon></button>
            <button aria-label="Enter"><ui-icon name="enter"></ui-icon></button>
            <button><em>fx</em></button>
            <button aria-label="Function list"><ui-icon name="chevbig"></ui-icon></button>
        </div>
        <div class="box formula"><input aria-label="Formula"><button aria-label="Expand formula bar"><ui-icon name="chevbig"></ui-icon></button></div>`;
    }
}

class SheetGrid extends BaseElement {
    render() {
        const widths = [92, 115, 101, 133, 269, 77, 116, 101, 92, 86, 78, 131, 44, 105, 168, 64, 64, 64];
        const heads = ['sku', 'composite_name', 'composite_sku', 'composite_quantity', 'name', 'description', 'product_category', 'tags', 'active_online', 'supply_price', 'retail_price', 'supplier_name', 'active', 'track_inventory', 'outlet_tax_Lewisburg_PA'];
        const rows = {
            1: heads,
            2: ['100000067679', '', '', '', 'COORS LT 4/6 16CN 071990320003 2715', '', 'BEER / PINT 24', '3541;Case Beer', '0', '21.65', '28.54', 'DURDACH BROS INC', '1', '1', 'Default Tax'],
            3: ['100000068672', '', '100000067679', '', 'COORS LT 6PK 16 CN 071990320003 2715**', '', 'BEER / PINT 06', '1148;comp', '0', '5.41', '7.36', '', '1', '0', 'Default Tax']
        };
        const cell = (r, c) => {
            const text = (rows[r] || [])[c] || '';
            const cls = [];
            if (r === 1 && c < heads.length) cls.push('head');
            // active_online is the only heading without a note
            if (r === 1 && c < heads.length && c !== 8) cls.push('note');
            if (r > 1 && /^[\d.]+$/.test(text)) cls.push('warn');
            if (r === 2 && c === 4) cls.push('copied');
            if (r === 3 && c === 1) cls.push('active');
            return `<td${cls.length ? ` class="${cls.join(' ')}"` : ''}>${text}</td>`;
        };
        let body = '';
        for (let r = 1; r <= 37; r++) {
            body += `<tr><th${r === 3 ? ' class="sel"' : ''}>${r}</th>${widths.map((w, c) => cell(r, c)).join('')}</tr>`;
        }
        return `
        <style>
            :host { display: flex; overflow: hidden; }
            .view { flex: 1; overflow: hidden; background: #fff; }
            table { table-layout: fixed; width: 1926px; border-collapse: separate; border-spacing: 0; font: 13px/18px "Noto Sans CJK SC", sans-serif; color: #000; }
            th { font-weight: 400; color: #444; background: #efefef; padding: 1px 0 0; height: 20px; border-right: 1px solid #dadada; border-bottom: 1px solid #dadada; }
            thead th { border-bottom-color: #9c9c9c; }
            tbody th { text-align: center; border-right-color: #a6a6a6; padding-right: 1px; }
            th.sel { background: #dfdfdf; color: #1e6b41; }
            thead th.sel { border-bottom: 2px solid #1e6b41; line-height: 17px; }
            tbody th.sel { border-right: 2px solid #1e6b41; padding-right: 0; }
            td { height: 20px; padding: 0 0 1px 2px; border-right: 1px solid #dedede; border-bottom: 1px solid #dedede; white-space: nowrap; }
            .head { padding: 1px 0 0 2px; background-color: #e4e9ec; border-color: #e4e9ec; font: 700 14px/18px Lato, sans-serif; }
            .note { background-image: linear-gradient(to top right, transparent 50%, #c81414 50%); background-size: 7px 7px; background-position: top right; background-repeat: no-repeat; background-origin: border-box; }
            .warn { background: linear-gradient(to bottom right, #137a1a 50%, transparent 50%) top left / 7px 7px no-repeat; }
            .copied, .active { position: relative; }
            .copied::after { content: ""; position: absolute; inset: -1px; border: 2px dashed #1e6b41; }
            .active::after { content: ""; position: absolute; inset: -2px; border: 2px solid #1e6b41; }
            .active::before { content: ""; position: absolute; right: -3px; bottom: -3px; width: 5px; height: 5px; background: #1e6b41; outline: 1px solid #fff; z-index: 1; }
            .corner { background: linear-gradient(to bottom right, transparent 50%, #dadada 50%) 11px 6px / 11px 11px no-repeat #efefef; }
            .scroll { width: 21px; display: flex; flex-direction: column; align-items: center; gap: 4px; padding: 5px 0 2px; background: #f4f4f4; }
            .scroll i { width: 9px; flex: 1; border-radius: 4px; background: #707070; }
            .up, .down { width: 9px; height: 8px; background: #666; clip-path: polygon(50% 0, 100% 100%, 0 100%); }
            .down { clip-path: polygon(0 0, 100% 0, 50% 100%); }
        </style>
        <div class="view">
            <table>
                <colgroup><col style="width:26px">${widths.map(w => `<col style="width:${w}px">`).join('')}</colgroup>
                <thead><tr><th class="corner"></th>${widths.map((w, c) => `<th${c === 1 ? ' class="sel"' : ''}>${String.fromCharCode(65 + c)}</th>`).join('')}</tr></thead>
                <tbody>${body}</tbody>
            </table>
        </div>
        <div class="scroll"><button class="up" aria-label="Scroll up"></button><i></i><button class="down" aria-label="Scroll down"></button></div>`;
    }
}

class SheetTabs extends BaseElement {
    render() {
        return `
        <style>
            :host { display: flex; height: 32px; border-top: 1px solid #d5d0c8; padding-right: 18px; }
            .nav { width: 33px; height: 30px; }
            .tab { width: 113px; height: 29px; margin: -1px 0 0 34px; background: #fff; border-radius: 0 0 5px 5px; box-shadow: 0 0 1px #b9b4ac; font-size: 13px; font-weight: 600; }
            .tab span { line-height: 18px; padding: 0 0 2px; border-bottom: 2px solid #1e6b41; }
            .sep { width: 1px; height: 18px; margin: 7px 0 0 3px; background: #cfc9c1; }
            .add { width: 24px; height: 30px; margin-left: 35px; }
            .dots { width: 12px; height: 30px; margin: 0 10px 0 auto; }
            .scroll { display: flex; align-items: center; gap: 5px; width: 730px; height: 18px; margin-top: 6px; padding: 0 5px; border-radius: 6px; background: #f4f4f4; }
            .scroll i { width: 318px; height: 9px; border-radius: 4px; background: #707070; }
            .l, .r { width: 8px; height: 9px; background: #666; clip-path: polygon(0 50%, 100% 0, 100% 100%); }
            .r { clip-path: polygon(0 0, 100% 50%, 0 100%); margin-left: auto; }
        </style>
        <button class="nav" style="margin-left:15px" aria-label="Previous sheet"><ui-icon name="prev"></ui-icon></button>
        <button class="nav" aria-label="Next sheet"><ui-icon name="next"></ui-icon></button>
        <button class="tab"><span>Product Export</span></button>
        <span class="sep"></span>
        <button class="add" aria-label="New sheet"><ui-icon name="plus"></ui-icon></button>
        <button class="dots" aria-label="Resize scroll bar"><ui-icon name="dots"></ui-icon></button>
        <div class="scroll"><button class="l" aria-label="Scroll left"></button><i></i><button class="r" aria-label="Scroll right"></button></div>`;
    }
}

class StatusBar extends BaseElement {
    render() {
        return `
        <style>
            :host { display: flex; align-items: center; height: 22px; padding: 0 7px 0 11px; background: #f3f4f4; border-top: 1px solid #fff; }
            p { margin: 0 auto 0 0; padding-top: 1px; }
            .view { width: 40px; height: 21px; }
            .on { background: #dedede; }
            .zoom { width: 14px; height: 20px; font-size: 14px; }
            input { appearance: none; width: 100px; height: 12px; margin: 0 3px; background: linear-gradient(#666, #666) center / 100% 1px no-repeat; }
            input::-webkit-slider-thumb { appearance: none; width: 5px; height: 11px; background: #555; }
            output { width: 37px; text-align: right; font-size: 10px; }
        </style>
        <p>Select destination and press ENTER or choose Paste</p>
        <button class="view on" aria-label="Normal view"><ui-icon name="normal"></ui-icon></button>
        <button class="view" aria-label="Page layout"><ui-icon name="layout"></ui-icon></button>
        <button class="view" aria-label="Page break preview"><ui-icon name="pagebreak"></ui-icon></button>
        <button class="zoom">−</button>
        <input type="range" aria-label="Zoom">
        <button class="zoom">+</button>
        <output>100%</output>`;
    }
}

class TaskBar extends BaseElement {
    render() {
        const apps = [['taskview', 'Task view'], ['store', 'Store'], ['chrome', 'Chrome', 'run chrome'], ['lock', 'KeePass'], ['folder', 'Explorer', 'run'], ['word', 'Word'], ['excel24', 'Excel', 'current'], ['outlook', 'Outlook', 'run'], ['splash', 'Splashtop', 'run'], ['rdp', 'Remote Desktop'], ['snip', 'Snipping Tool'], ['merge24', 'Merge'], ['slack', 'Slack', 'alert']];
        return `
        <style>
            :host { display: grid; grid-template-columns: 540fr 841px 538fr; height: 41px; background: #302216; color: #fff; border-top: 1px solid #4a3c30; overflow: hidden; }
            .center { grid-column: 2; display: flex; }
            .app { width: 40px; height: 37px; margin: 3px 2px 0; padding-top: 2px; border-radius: 4px 4px 0 0; border-bottom: 2px solid transparent; }
            .run { border-image: linear-gradient(to right, transparent 18px, #a49a90 18px 22px, transparent 22px) 2; }
            .current { background: #3f3023; box-shadow: 3px 0 0 #392b1f; border-image: linear-gradient(to right, transparent 12px, #5cb8e6 12px 28px, transparent 28px) 2; }
            .alert { background: #84434b; border-image: linear-gradient(to right, transparent 4px, #f08a94 4px 36px, transparent 36px) 2; }
            .chrome { display: grid; justify-content: end; justify-items: end; padding: 0 2px 3px 0; }
            .chrome ui-icon, .chrome span { grid-area: 1 / 1; }
            .chrome span { width: 18px; align-self: start; font-size: 8px; line-height: 16px; text-align: center; }
            .search { display: flex; align-items: center; gap: 11px; width: 218px; height: 30px; margin: 8px 3px 0 4px; padding-left: 11px; border-radius: 15px; background: #f4f1f0; }
            .search input { border: 0; outline: 0; background: none; width: 150px; padding: 0; font-size: 12px; }
            .search input::placeholder { color: #666; opacity: 1; }
            .clock { justify-self: end; padding: 7px 18px 0 0; text-align: right; }
        </style>
        <div class="center">
            <button class="app" aria-label="Start"><ui-icon name="windows"></ui-icon></button>
            <div class="search"><ui-icon name="tbsearch"></ui-icon><input placeholder="Search" aria-label="Search Windows"></div>
            ${apps.map(([icon, label, cls = '']) => `<button class="app ${cls}" aria-label="${label}"><ui-icon name="${icon}"></ui-icon>${icon === 'chrome' ? '<span>M</span>' : ''}</button>`).join('')}
        </div>
        <div class="clock">2:41 PM<br>3/9/2026</div>`;
    }
}

customElements.define('ui-icon', UiIcon);
customElements.define('title-bar', TitleBar);
customElements.define('ribbon-tabs', RibbonTabs);
customElements.define('ribbon-group', RibbonGroup);
customElements.define('big-button', BigButton);
customElements.define('row-button', RowButton);
customElements.define('combo-box', ComboBox);
customElements.define('excel-ribbon', ExcelRibbon);
customElements.define('formula-bar', FormulaBar);
customElements.define('sheet-grid', SheetGrid);
customElements.define('sheet-tabs', SheetTabs);
customElements.define('status-bar', StatusBar);
customElements.define('task-bar', TaskBar);
</script>
</body>
</html>
